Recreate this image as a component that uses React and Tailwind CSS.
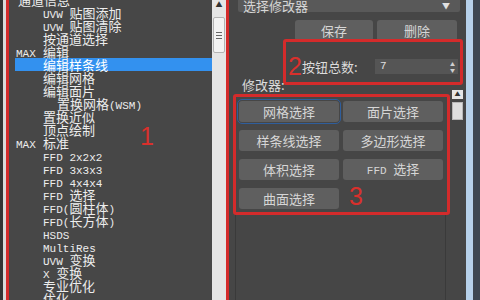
import React from "react";

const mono = "font-['Liberation_Mono',monospace] text-[11px]";

// split ascii runs so latin gets the narrow mono face, like the bitmap font
function Mixed({ s }) {
  return s
    .split(/([\x20-\x7e]+)/)
    .filter(Boolean)
    .map((p, i) =>
      /^[\x20-\x7e]+$/.test(p) ? (
        <span key={i} className={mono}>
          {p}
        </span>
      ) : (
        <span key={i}>{p}</span>
      )
    );
}

const rows = [
  { t: "通道信息", pl: "pl-[3px]" },
  { t: "UVW 贴图添加" },
  { t: "UVW 贴图清除" },
  { t: "按通道选择" },
  { t: "编辑", max: true },
  { t: "编辑样条线", sel: true },
  { t: "编辑网格" },
  { t: "编辑面片" },
  { t: "置换网格(WSM)", pl: "pl-[42px]" },
  { t: "置换近似" },
  { t: "顶点绘制" },
  { t: "标准", max: true },
  { t: "FFD 2x2x2" },
  { t: "FFD 3x3x3" },
  { t: "FFD 4x4x4" },
  { t: "FFD 选择" },
  { t: "FFD(圆柱体)" },
  { t: "FFD(长方体)" },
  { t: "HSDS" },
  { t: "MultiRes" },
  { t: "UVW 变换" },
  { t: "X 变换" },
  { t: "专业优化" },
  { t: "优化" },
];

const mods = ["网格选择", "面片选择", "样条线选择", "多边形选择", "体积选择", "FFD 选择", "曲面选择"];

function ListRow({ r }) {
  const pad = r.max ? "pl-[1px]" : r.pl || "pl-[28px]";
  return (
    <div
      className={`ml-[6px] h-[13px] whitespace-nowrap text-[13px] leading-[13px] text-[#ededed] ${pad} ${
        r.sel ? "bg-[#3391ef] text-white" : ""
      }`}
    >
      {r.max && <span className={`${mono} inline-block w-[27px]`}>MAX</span>}
      <Mixed s={r.t} />
    </div>
  );
}

function Btn({ children, className = "" }) {
  return (
    <div
      className={`flex h-[21px] items-center justify-center rounded-[3px] bg-[#5f5f5f] text-[13px] leading-none text-[#d6d6d6] ${className}`}
    >
      <span className="whitespace-pre">{children}</span>
    </div>
  );
}

export default function App() {
  return (
    <div className="flex h-[300px] w-[480px] overflow-hidden bg-[#464646] font-['Noto_Sans_CJK_SC',sans-serif]">
      <div className="w-[3px] bg-[#343434]" />
      <div className="w-[3px] bg-[#dadada]" />

      {/* box 1: modifier list */}
      <div className="relative flex w-[223px] border-x-[3px] border-[#d42b2b]">
        <div className="flex-1 overflow-hidden bg-[#474747]">
          <div className="-mt-[7px]">
            {rows.map((r, i) => (
              <ListRow key={i} r={r} />
            ))}
          </div>
        </div>
        <div className="w-[14px] bg-[#e5e5e5]">
          <div className="flex h-[10px] items-start justify-center text-[7px] leading-[8px] text-[#333]">▲</div>
          <div className="mx-[1px] mt-[7px] flex h-[36px] flex-col items-center justify-center gap-[2px] rounded-[2px] border border-[#b3b3b3] bg-[#f3f3f3]">
            <div className="h-px w-[6px] bg-[#666]" />
            <div className="h-px w-[6px] bg-[#666]" />
            <div className="h-px w-[6px] bg-[#666]" />
          </div>
        </div>
        <span className="absolute left-[131px] top-[124px] font-['Liberation_Sans',sans-serif] text-[25px] leading-none text-[#d9302c]">
          1
        </span>
      </div>

      {/* right rollout */}
      <div className="flex w-[237px] flex-col bg-[#464646]">
        <div className="-mt-[8px] ml-[9px] flex h-[20px] w-[222px] items-center justify-between rounded-[2px] bg-[#595959] pl-[5px] pr-[10px] pt-[7px] text-[13px] leading-none text-[#d6d6d6]">
          <span>选择修改器</span>
          <span className="text-[8px] text-[#e0e0e0]">▼</span>
        </div>

        <div className="mt-[8px] ml-[66px] flex gap-[4px]">
          <Btn className="h-[19px] w-[78px]">保存</Btn>
          <Btn className="h-[19px] w-[80px]">删除</Btn>
        </div>

        {/* box 2 */}
        <div className="-mt-[2px] ml-[54px] flex h-[46px] w-[180px] items-center rounded-[3px] border-[3px] border-[#d42b2b] pl-[2px] pr-[2px] pt-[9px]">
          <span className="font-['Liberation_Sans',sans-serif] text-[25px] leading-none text-[#d9302c]">2</span>
          <span className="text-[13px] leading-none text-[#dcdcdc]">按钮总数:</span>
          <div className="ml-auto flex h-[15px] w-[83px] items-center justify-between bg-[#555555] pl-[5px] pr-[3px]">
            <span className={`${mono} text-[#e0e0e0]`}>7</span>
            <span className="flex flex-col text-[5px] leading-[6px] text-[#cfcfcf]">
              <span>▲</span>
              <span>▼</span>
            </span>
          </div>
        </div>

        <div className="-mt-[7px] ml-[13px] text-[13px] leading-[14px] text-[#dcdcdc]">修改器:</div>

        <div className="flex items-start">
          {/* box 3 */}
          <div className="mt-[2px] ml-[4px] w-[217px] rounded-[3px] border-[3px] border-[#d42b2b] pt-[4px] pb-[3px] pl-[3px] pr-[4px]">
            <div className="grid grid-cols-[100px_100px] gap-x-[4px] gap-y-[8px]">
              {mods.map((m, i) => (
                <Btn key={m} className={i === 0 ? "outline-1 outline-offset-1 outline-[#2f5e9c]" : ""}>
                  <Mixed s={m} />
                </Btn>
              ))}
              <span className="-mt-[4px] ml-[6px] font-['Liberation_Sans',sans-serif] text-[25px] leading-none text-[#d9302c]">
                3
              </span>
            </div>
          </div>
          <div className="-mt-[2px] ml-[2px] w-[11px]">
            <div className="flex h-[9px] items-start justify-center bg-[#e6e6e6] text-[6px] leading-[8px] text-[#333]">▲</div>
            <div className="mt-[3px] h-[18px] border border-[#b8b8b8] bg-[#dedede]" />
          </div>
        </div>

        <div className="ml-[6px] w-[211px] flex-1 border-x border-[#3a3a3a]" />
      </div>

      <div className="w-[7px] bg-[#b7d1ea]" />
      <div className="w-[7px] bg-[#3e4751]" />
    </div>
  );
}
